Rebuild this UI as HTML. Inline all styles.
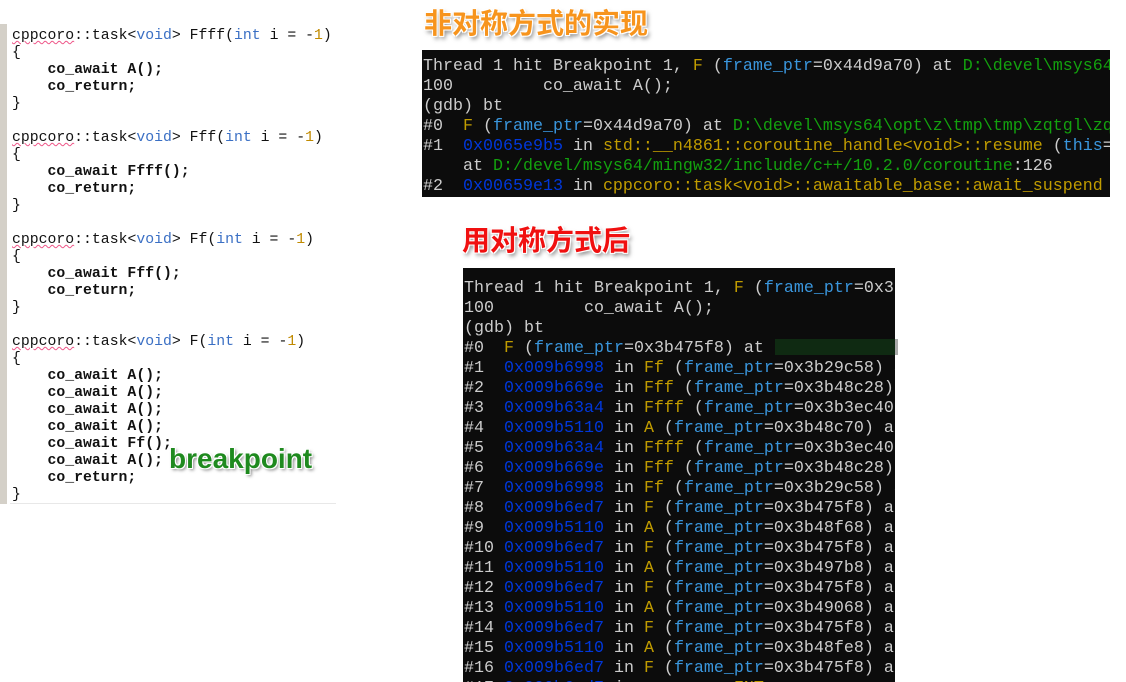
<!DOCTYPE html>
<html><head><meta charset="utf-8"><style>
body{margin:0;width:1126px;height:682px;background:#fff;position:relative;overflow:hidden;}
.code{position:absolute;left:0;top:28px;width:336px;}
.gbar{position:absolute;left:0;top:24px;width:7px;height:480px;background:#d4d0c8;}
.code pre{margin:0;position:absolute;left:12px;top:0;font:bold 14.8px/17px "Liberation Mono",monospace;color:#111;letter-spacing:0;}
.kw{color:#3a6fc4;font-weight:normal}.num{color:#c08a00;font-weight:normal}
.sq{text-decoration:underline wavy #e58;text-decoration-thickness:1px;font-weight:normal}
.n{font-weight:normal}
.bline{position:absolute;left:10px;top:503px;width:326px;height:1px;background:#e8e8e8;}
.term{position:absolute;background:#0c0c0c;overflow:hidden;}
.term pre{margin:0;font:16.67px/20px "Liberation Mono","Noto Sans CJK SC",monospace;color:#cccccc;white-space:pre;}
.y{color:#c19c00}.c{color:#3a96dd}.b{color:#0037da}.g{color:#13a10e}
.t{position:absolute;font:bold 28px/32px "Noto Sans CJK SC","WenQuanYi Zen Hei",sans-serif;text-shadow:0 0 2px #fff,1px 1px 0 #fff,-1px -1px 0 #fff,1px -1px 0 #fff,-1px 1px 0 #fff,2px 3px 4px rgba(0,0,0,.5);}
.bp{position:absolute;left:169px;top:444px;font:bold 28px/30px "Liberation Sans",sans-serif;color:#1f8a1f;text-shadow:1px 1px 0 #fff,-1px -1px 0 #fff,1px -1px 0 #fff,-1px 1px 0 #fff,2px 2px 3px rgba(0,0,0,.5);}
</style></head><body>
<div class="gbar"></div>
<div class="code"><pre><span class="sq">cppcoro</span><span class="n">::task&lt;</span><span class="kw">void</span><span class="n">&gt; Ffff(</span><span class="kw">int</span><span class="n"> i = -</span><span class="num">1</span><span class="n">)</span>
<span class="n">{</span>
    co_await A();
    co_return;
<span class="n">}</span>

<span class="sq">cppcoro</span><span class="n">::task&lt;</span><span class="kw">void</span><span class="n">&gt; Fff(</span><span class="kw">int</span><span class="n"> i = -</span><span class="num">1</span><span class="n">)</span>
<span class="n">{</span>
    co_await Ffff();
    co_return;
<span class="n">}</span>

<span class="sq">cppcoro</span><span class="n">::task&lt;</span><span class="kw">void</span><span class="n">&gt; Ff(</span><span class="kw">int</span><span class="n"> i = -</span><span class="num">1</span><span class="n">)</span>
<span class="n">{</span>
    co_await Fff();
    co_return;
<span class="n">}</span>

<span class="sq">cppcoro</span><span class="n">::task&lt;</span><span class="kw">void</span><span class="n">&gt; F(</span><span class="kw">int</span><span class="n"> i = -</span><span class="num">1</span><span class="n">)</span>
<span class="n">{</span>
    co_await A();
    co_await A();
    co_await A();
    co_await A();
    co_await Ff();
    co_await A();
    co_return;
<span class="n">}</span></pre></div>
<div class="bline"></div>
<div class="bp">breakpoint</div>

<div class="t" style="left:424px;top:6px;color:#f7941d;">非对称方式的实现</div>
<div class="term" style="left:422px;top:50px;width:688px;height:147px;"><pre style="padding:7px 0 0 1px">Thread 1 hit Breakpoint 1, <span class="y">F</span> (<span class="c">frame_ptr</span>=0x44d9a70) at <span class="g">D:\devel\msys64\opt</span>
100         co_await A();
(gdb) bt
#0  <span class="y">F</span> (<span class="c">frame_ptr</span>=0x44d9a70) at <span class="g">D:\devel\msys64\opt\z\tmp\tmp\zqtgl\zq</span>
#1  <span class="b">0x0065e9b5</span> in <span class="y">std::__n4861::coroutine_handle&lt;void&gt;::resume</span> (<span class="c">this</span>=
    at <span class="g">D:/devel/msys64/mingw32/include/c++/10.2.0/coroutine</span>:126
#2  <span class="b">0x00659e13</span> in <span class="y">cppcoro::task&lt;void&gt;::awaitable_base::await_suspend</span>
    at <span class="g">D:/devel/msys64/mingw32/include</span></pre></div>

<div class="t" style="left:462px;top:223px;color:#f01010;">用对称方式后</div>
<div class="term" style="left:463px;top:268px;width:432px;height:414px;"><pre style="padding:11px 0 0 1px">Thread 1 hit Breakpoint 1, <span class="y">F</span> (<span class="c">frame_ptr</span>=0x3b
100         co_await A();
(gdb) bt
#0  <span class="y">F</span> (<span class="c">frame_ptr</span>=0x3b475f8) at 
#1  <span class="b">0x009b6998</span> in <span class="y">Ff</span> (<span class="c">frame_ptr</span>=0x3b29c58) a
#2  <span class="b">0x009b669e</span> in <span class="y">Fff</span> (<span class="c">frame_ptr</span>=0x3b48c28) a
#3  <span class="b">0x009b63a4</span> in <span class="y">Ffff</span> (<span class="c">frame_ptr</span>=0x3b3ec40
#4  <span class="b">0x009b5110</span> in <span class="y">A</span> (<span class="c">frame_ptr</span>=0x3b48c70) a
#5  <span class="b">0x009b63a4</span> in <span class="y">Ffff</span> (<span class="c">frame_ptr</span>=0x3b3ec40
#6  <span class="b">0x009b669e</span> in <span class="y">Fff</span> (<span class="c">frame_ptr</span>=0x3b48c28) a
#7  <span class="b">0x009b6998</span> in <span class="y">Ff</span> (<span class="c">frame_ptr</span>=0x3b29c58) a
#8  <span class="b">0x009b6ed7</span> in <span class="y">F</span> (<span class="c">frame_ptr</span>=0x3b475f8) a
#9  <span class="b">0x009b5110</span> in <span class="y">A</span> (<span class="c">frame_ptr</span>=0x3b48f68) a
#10 <span class="b">0x009b6ed7</span> in <span class="y">F</span> (<span class="c">frame_ptr</span>=0x3b475f8) a
#11 <span class="b">0x009b5110</span> in <span class="y">A</span> (<span class="c">frame_ptr</span>=0x3b497b8) a
#12 <span class="b">0x009b6ed7</span> in <span class="y">F</span> (<span class="c">frame_ptr</span>=0x3b475f8) a
#13 <span class="b">0x009b5110</span> in <span class="y">A</span> (<span class="c">frame_ptr</span>=0x3b49068) a
#14 <span class="b">0x009b6ed7</span> in <span class="y">F</span> (<span class="c">frame_ptr</span>=0x3b475f8) a
#15 <span class="b">0x009b5110</span> in <span class="y">A</span> (<span class="c">frame_ptr</span>=0x3b48fe8) a
#16 <span class="b">0x009b6ed7</span> in <span class="y">F</span> (<span class="c">frame_ptr</span>=0x3b475f8) a
#17 <span class="b">0x009b6ed7</span> in <span class="y">cppcoro::FNT</span></pre>
<div style="position:absolute;left:312px;top:71px;width:120px;height:16px;background:#0f2a12;"></div>
</div>
<div style="position:absolute;left:895px;top:339px;width:3px;height:16px;background:#aaa;"></div>
</body></html>
